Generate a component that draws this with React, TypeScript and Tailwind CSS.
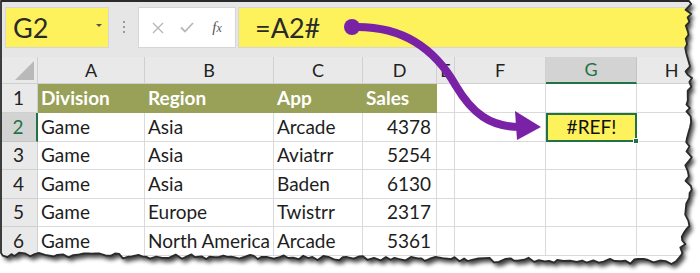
import React from "react"

const rows = [
  ["Game", "Asia", "Arcade", "4378"],
  ["Game", "Asia", "Aviatrr", "5254"],
  ["Game", "Asia", "Baden", "6130"],
  ["Game", "Europe", "Twistrr", "2317"],
  ["Game", "North America", "Arcade", "5361"],
]

const letters = ["A", "B", "C", "D", "E", "F", "G", "H"]

// torn paper edge, seeded so it's stable between renders
function tornPath() {
  let s = 17
  const rnd = () => {
    s = (s * 9301 + 49297) % 233280
    return s / 233280
  }
  const pts: string[] = ["M1,1", "L689,1"]
  for (let y = 4; y < 258; y += 3 + rnd() * 3) {
    const x = 685 + rnd() * 7 + (y > 220 ? -(y - 220) * 0.2 : 0)
    pts.push(`L${x.toFixed(1)},${y.toFixed(1)}`)
  }
  for (let x = 676; x > 0; x -= 3 + rnd() * 4) {
    const base = 254 + (x / 680) * 7
    const y = base + (rnd() - 0.35) * 5
    pts.push(`L${x.toFixed(1)},${y.toFixed(1)}`)
  }
  pts.push("L1,253 Z")
  return pts.join(" ")
}

function TornEdge() {
  const paper = tornPath()
  const outside = "M-20,-20 H720 V300 H-20 Z " + paper
  return (
    <svg className="pointer-events-none absolute inset-0" width={700} height={273} viewBox="0 0 700 273">
      <defs>
        <clipPath id="out">
          <path d={outside} clipRule="evenodd" />
        </clipPath>
        <filter id="blur" x="-10%" y="-10%" width="120%" height="120%">
          <feGaussianBlur stdDeviation="2.2" />
        </filter>
      </defs>
      <path d={outside} fill="#fff" fillRule="evenodd" />
      <g clipPath="url(#out)">
        <path d={paper} transform="translate(3,4)" fill="#000" opacity={0.75} filter="url(#blur)" />
      </g>
      <path d={paper} fill="none" stroke="#2a2a2a" strokeWidth={1.8} strokeLinejoin="round" />
    </svg>
  )
}

function Arrow() {
  return (
    <svg className="pointer-events-none absolute inset-0" width={700} height={273} viewBox="0 0 700 273">
      <circle cx={352} cy={27} r={8} fill="#7a22a6" />
      <path
        d="M352,27 C405,25 437,52 456,86 C472,113 490,127 520,127"
        fill="none"
        stroke="#7a22a6"
        strokeWidth={8}
        strokeLinecap="round"
      />
      <path d="M515,111 L541,127 L517,140 Z" fill="#7a22a6" />
    </svg>
  )
}

export default function App() {
  return (
    <div className="relative h-[273px] w-[700px] overflow-hidden bg-white font-['Lato',sans-serif] text-[#1d1d1d]">
      {/* Ribbon / formula bar */}
      <div className="flex h-[57px] items-start bg-[#e6e6e6] pl-[5px] pt-[7px]">
        <div className="flex h-[41px] w-[104px] items-center justify-between border border-[#d6d6d6] bg-[#fdf25b] pl-[7px] pr-[6px]">
          <span className="text-[27px] leading-none text-[#2a2a2a]">G2</span>
          <span className="mt-[-4px] h-0 w-0 border-x-[3px] border-t-[3px] border-x-transparent border-t-[#555]" />
        </div>
        <div className="flex w-[29px] flex-col items-center gap-[3px] pt-[14px]">
          <span className="h-[2px] w-[2px] bg-[#9a9a9a]" />
          <span className="h-[2px] w-[2px] bg-[#9a9a9a]" />
          <span className="h-[2px] w-[2px] bg-[#9a9a9a]" />
        </div>
        <div className="flex h-[41px] w-[98px] items-center border border-[#d6d6d6] bg-white">
          <span className="flex w-[33px] justify-center pl-[4px]">
            <svg width={12} height={12} viewBox="0 0 12 12">
              <path d="M1,1 L11,11 M11,1 L1,11" stroke="#b8b8b8" strokeWidth={1.4} />
            </svg>
          </span>
          <span className="flex w-[30px] justify-center">
            <svg width={14} height={11} viewBox="0 0 14 11">
              <path d="M1,5.5 L5,9.5 L13,1" fill="none" stroke="#b8b8b8" strokeWidth={1.8} />
            </svg>
          </span>
          <span className="w-[30px] text-center font-['Liberation_Serif',serif] text-[15px] italic leading-none text-[#555]">
            f<span className="text-[12px]">x</span>
          </span>
        </div>
        <div className="ml-[2px] flex h-[41px] flex-1 items-center border border-[#d6d6d6] bg-[#fdf25b] pl-[16px]">
          <span className="text-[27px] leading-none text-[#2a2a2a]">=A2#</span>
        </div>
      </div>

      {/* Sheet grid */}
      <div className="grid grid-cols-[38px_107px_129px_89px_74px_18px_91px_91px_70px] grid-rows-[27px_29px_29px_28px_29px_28px_29px] text-[19px]">
        <div className="relative border-r border-b border-[#d0d0d0] bg-[#e9e9e9]">
          <span className="absolute bottom-[3px] right-[3px] h-0 w-0 border-b-[19px] border-l-[19px] border-b-[#b9b9b9] border-l-transparent" />
        </div>
        {letters.map((l) => (
          <div
            key={l}
            className={
              l === "G"
                ? "flex items-center justify-center border-r border-b-2 border-r-[#c4c4c4] border-b-[#217346] bg-[#d3d3d3] text-[18px] text-[#217346]"
                : "flex items-center justify-center border-r border-b border-[#d0d0d0] bg-[#e9e9e9] text-[18px] text-[#222]"
            }
          >
            {l}
          </div>
        ))}

        {/* row 1: table header */}
        <div className="flex items-center justify-center border-r border-b border-[#d0d0d0] bg-[#e9e9e9] text-[#222]">1</div>
        {["Division", "Region", "App", "Sales"].map((h) => (
          <div key={h} className="flex items-center bg-[#99a158] pl-[3px] font-bold text-white">
            {h}
          </div>
        ))}
        <div className="border-r border-b border-[#dadada]" />
        <div className="border-r border-b border-[#dadada]" />
        <div className="border-r border-b border-[#dadada]" />
        <div className="border-b border-[#dadada]" />

        {rows.map((r, i) => (
          <React.Fragment key={i}>
            <div
              className={
                i === 0
                  ? "flex items-center justify-center border-r-2 border-b border-r-[#217346] border-b-[#c4c4c4] bg-[#d3d3d3] text-[#217346]"
                  : "flex items-center justify-center border-r border-b border-[#d0d0d0] bg-[#e9e9e9] text-[#222]"
              }
            >
              {i + 2}
            </div>
            <div className="flex items-center border-r border-b border-[#dadada] pl-[3px]">{r[0]}</div>
            <div className="flex items-center whitespace-nowrap border-r border-b border-[#dadada] pl-[3px]">{r[1]}</div>
            <div className="flex items-center border-r border-b border-[#dadada] pl-[3px]">{r[2]}</div>
            <div className="flex items-center justify-end border-r border-b border-[#dadada] pr-[5px]">{r[3]}</div>
            <div className="border-r border-b border-[#dadada]" />
            <div className="border-r border-b border-[#dadada]" />
            {i === 0 ? (
              <div className="relative flex items-center justify-center border-2 border-[#217346] bg-[#fdf25b] text-[#111]">
                #REF!
                <span className="absolute -right-[4px] -bottom-[4px] h-[6px] w-[6px] border border-white bg-[#217346]" />
              </div>
            ) : (
              <div className="border-r border-b border-[#dadada]" />
            )}
            <div className="border-b border-[#dadada]" />
          </React.Fragment>
        ))}
      </div>

      <Arrow />
      <TornEdge />
    </div>
  )
}
